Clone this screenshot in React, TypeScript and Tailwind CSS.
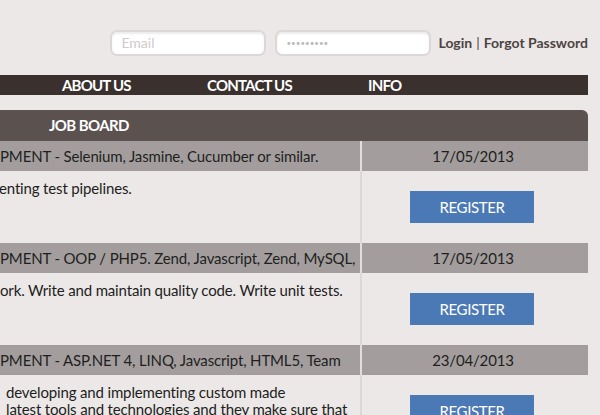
import React from "react";

const font = { fontFamily: "Lato, 'Open Sans', 'Liberation Sans', sans-serif" };

const jobs = [
  {
    title: "PMENT - Selenium, Jasmine, Cucumber or similar.",
    date: "17/05/2013",
    lines: ["enting test pipelines."],
    indent: "-ml-[1px]",
  },
  {
    title: "PMENT - OOP / PHP5. Zend, Javascript, Zend, MySQL,",
    date: "17/05/2013",
    lines: ["ork. Write and maintain quality code. Write unit tests."],
    indent: "",
  },
  {
    title: "PMENT - ASP.NET 4, LINQ, Javascript, HTML5, Team",
    date: "23/04/2013",
    lines: [
      "developing and implementing custom made",
      "latest tools and technologies and they make sure that",
    ],
    indent: "ml-[6px]",
  },
];

function JobRow({ job }: { job: (typeof jobs)[number] }) {
  return (
    <>
      <div className="h-[30px] bg-[#a39e9d] flex items-center border-r-2 border-[#e2dedd]">
        <span className="whitespace-nowrap text-[15px] tracking-[-0.15px] text-[#221e1d]">{job.title}</span>
      </div>
      <div className="h-[30px] bg-[#a39e9d] flex items-center justify-center">
        <span className="text-[15px] tracking-[-0.15px] text-[#221e1d] pr-[4px]">{job.date}</span>
      </div>
      <div className="h-[72px] border-r-2 border-[#dcd8d7] pt-[9px]">
        {job.lines.map((l) => (
          <p
            key={l}
            className={`whitespace-nowrap text-[15px] tracking-[-0.15px] leading-[17px] text-[#221e1d] ${job.indent}`}
          >
            {l}
          </p>
        ))}
      </div>
      <div className="h-[72px] flex justify-center pt-[20px]">
        <button className="w-[124px] h-[32px] bg-[#4a79b5] text-white text-[15px] tracking-tight mr-[6px]">
          REGISTER
        </button>
      </div>
    </>
  );
}

export default function App() {
  return (
    <div className="w-[600px] h-[415px] overflow-hidden bg-[#ece8e7]" style={font}>
      {/* login bar */}
      <div className="flex items-center justify-end pt-[29px] pr-[12px] h-[56px]">
        <input
          className="w-[156px] h-[26px] rounded-[7px] border-2 border-[#dcd8d7] bg-white px-[9px] text-[14px] placeholder-[#cfcbcb] shadow-[inset_0_2px_2px_rgba(0,0,0,0.08)]"
          placeholder="Email"
        />
        <input
          type="password"
          className="ml-[9px] w-[156px] h-[26px] rounded-[7px] border-2 border-[#dcd8d7] bg-white px-[9px] text-[8px] text-[#bdb9b8] shadow-[inset_0_2px_2px_rgba(0,0,0,0.08)]"
          defaultValue="123456789"
        />
        <div className="ml-[7px] flex items-center text-[14px] font-bold text-[#4d4443]">
          <span>Login</span>
          <span className="mx-[4px] font-normal">|</span>
          <span>Forgot Password</span>
        </div>
      </div>

      {/* nav */}
      <div className="mt-[19px] w-[588px] h-[20px] bg-[#3a302e] flex items-center pl-[62px] text-white text-[15px] font-bold tracking-[-0.8px]">
        <span className="w-[145px]">ABOUT US</span>
        <span className="w-[161px]">CONTACT US</span>
        <span>INFO</span>
      </div>

      {/* job board */}
      <div className="mt-[15px] w-[588px]">
        <div className="h-[31px] bg-[#5b5250] rounded-tr-[6px] flex items-center pl-[49px] text-white text-[15px] font-bold tracking-[-0.6px]">
          JOB BOARD
        </div>
        <div className="grid grid-cols-[362px_226px]">
          {jobs.map((j) => (
            <JobRow key={j.title} job={j} />
          ))}
        </div>
      </div>
    </div>
  );
}
